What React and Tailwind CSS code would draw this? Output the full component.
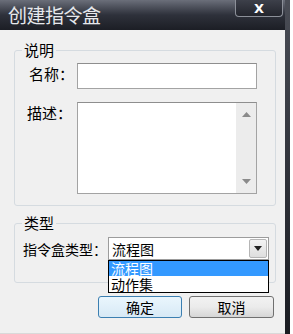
import React from "react";

const cjk = { fontFamily: '"Noto Sans CJK SC", "Noto Sans", sans-serif' };

export default function App() {
  return (
    <div className="w-[293px] h-[334px] bg-white flex overflow-hidden" style={cjk}>
      <div className="w-[285px] flex flex-col">
        {/* title bar */}
        <div className="h-[30px] relative bg-gradient-to-b from-[#6b6f7a] via-[#2e313b] to-[#1c1e25] flex items-center">
          <span className="ml-[8px] text-[19px] leading-[22px] text-[#e6e8ec] tracking-[-0.5px]">创建指令盒</span>
          <div className="absolute left-[235px] top-0 w-[48px] h-[17px] rounded-b-[4px] border border-t-0 border-[#8c9099] bg-gradient-to-b from-[#3d404a] to-[#23252d] flex items-center justify-center">
            <span className="text-white text-[13px] font-bold leading-none" style={{ fontFamily: '"DejaVu Sans", sans-serif' }}>X</span>
          </div>
        </div>
        {/* body */}
        <div className="flex-1 bg-[#f0f0f0] pt-[11px] border-b border-[#d9d9d9]">
          <fieldset className="ml-[14px] w-[262px] border border-[#d5dbe0] rounded-[3px] pb-[11px]">
            <legend className="ml-[7px] px-[2px] text-[15px] leading-[18px] text-black">说明</legend>
            <div className="flex items-center mt-[4px]">
              <span className="ml-[14px] w-[48px] text-[15px] leading-[18px] text-black -mt-[5px]">名称：</span>
              <div className="w-[180px] h-[26px] bg-white border border-[#a3a3a3] border-t-[#8e8e8e]" />
            </div>
            <div className="flex items-start mt-[13px]">
              <span className="ml-[12px] w-[50px] text-[15px] leading-[18px] text-black mt-[2px]">描述：</span>
              <div className="w-[180px] h-[92px] bg-white border border-[#a3a3a3] border-t-[#8e8e8e] flex justify-end">
                <div className="w-[20px] h-full bg-[#ececec] flex flex-col items-center justify-between py-[9px]">
                  <svg width="9" height="5" viewBox="0 0 9 5"><path d="M0 5 L4.5 0 L9 5 Z" fill="#8a8a8a" /></svg>
                  <svg width="9" height="5" viewBox="0 0 9 5"><path d="M0 0 L4.5 5 L9 0 Z" fill="#8a8a8a" /></svg>
                </div>
              </div>
            </div>
          </fieldset>
          <fieldset className="mt-[8px] ml-[14px] w-[262px] border border-[#d5dbe0] rounded-[3px] pb-[22px]">
            <legend className="ml-[7px] px-[2px] text-[15px] leading-[18px] text-black">类型</legend>
            <div className="flex items-center mt-[5px]">
              <span className="ml-[8px] w-[85px] text-[14px] leading-[18px] text-black">指令盒类型：</span>
              <div className="relative w-[161px] h-[23px] bg-white border border-[#9c9c9c] flex items-center">
                <span className="ml-[3px] text-[14px] leading-[18px] text-black flex-1">流程图</span>
                <div className="w-[18px] h-[19px] mr-[1px] bg-gradient-to-b from-[#f4f4f4] to-[#dedede] border border-[#b5b5b5] rounded-[2px] flex items-center justify-center">
                  <svg width="8" height="5" viewBox="0 0 8 5"><path d="M0 0 L4 5 L8 0 Z" fill="#222" /></svg>
                </div>
                <div className="absolute left-[-1px] top-[22px] w-[161px] h-[33px] bg-white border border-black flex flex-col z-10">
                  <div className="h-[15px] bg-[#3399ff] text-white text-[14px] leading-[15px] pl-[2px]">流程图</div>
                  <div className="h-[16px] text-black text-[14px] leading-[16px] pl-[2px]">动作集</div>
                </div>
              </div>
            </div>
          </fieldset>
          <div className="flex mt-[13px] ml-[98px] gap-[7px]">
            <div className="w-[84px] h-[22px] rounded-[3px] border border-[#3c7fb1] bg-gradient-to-b from-[#eaf6fd] to-[#d7e9f5] flex items-center justify-center text-[14px] leading-[18px] text-black">确定</div>
            <div className="w-[85px] h-[22px] rounded-[3px] border border-[#707070] bg-gradient-to-b from-[#f2f2f2] via-[#ebebeb] to-[#d6d6d6] flex items-center justify-center text-[14px] leading-[18px] text-black">取消</div>
          </div>
        </div>
      </div>
      <div className="w-[5px] bg-gradient-to-b from-[#4a4d56] to-[#1a1c22]" />
    </div>
  );
}
